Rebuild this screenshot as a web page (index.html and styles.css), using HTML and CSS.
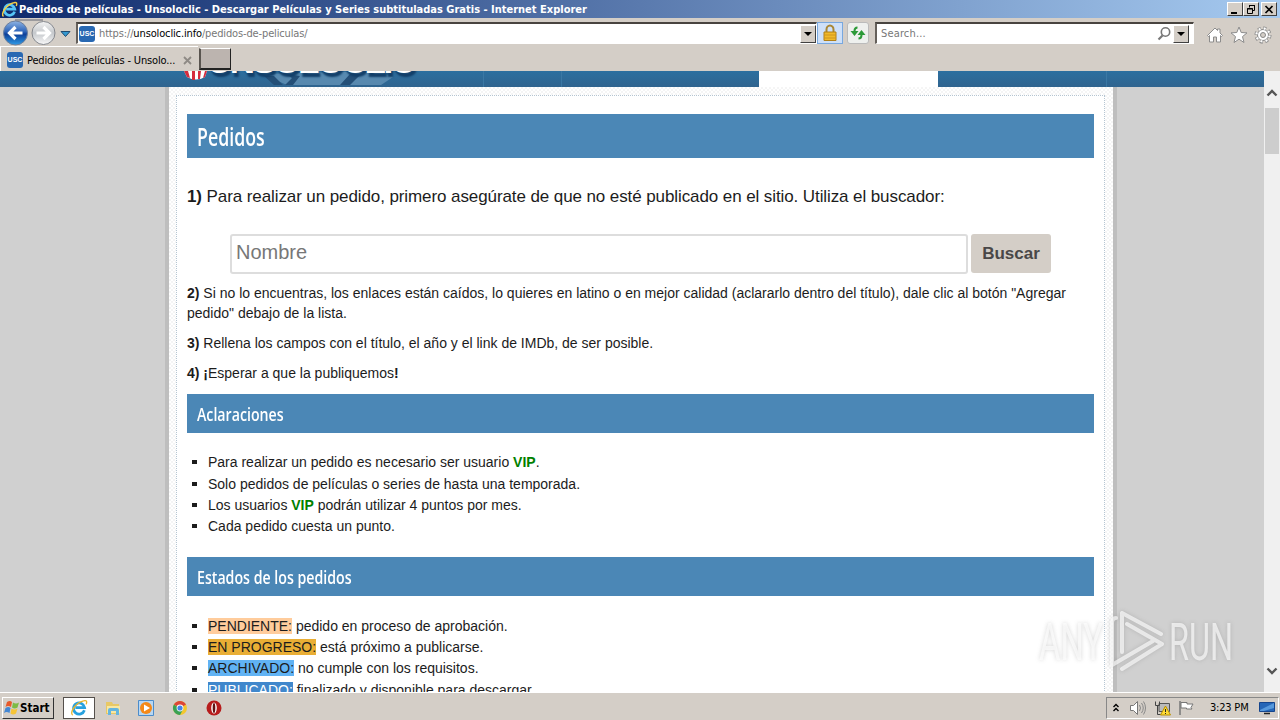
FILE: index.html
```html
<!DOCTYPE html>
<html lang="es">
<head>
<meta charset="UTF-8">
<title>Pedidos de películas - Unsoloclic</title>
<link rel="stylesheet" href="styles.css">
</head>
<body>
<div class="window">
  <!-- Title bar -->
  <div class="titlebar">
    <svg class="ie-icon" width="17" height="17" viewBox="0 0 20 20"><path d="M16 12.5A6.2 6.2 0 1 1 16.2 9.5H6" fill="none" stroke="#55c5f7" stroke-width="3.2"/><path d="M3 18C-1 16 6 4 15 2c4-1 4 1 3 4" fill="none" stroke="#f5cf45" stroke-width="1.7"/></svg>
    <span class="title">Pedidos de películas - Unsoloclic - Descargar Películas y Series subtituladas Gratis - Internet Explorer</span>
    <div class="window-buttons">
      <button class="win-btn"><svg width="14" height="11" viewBox="0 0 14 11"><path d="M3 8h6v2H3z"/></svg></button>
      <button class="win-btn"><svg width="14" height="11" viewBox="0 0 14 11"><path d="M5.5 3.5v-2h5v5h-2M5 1.5h6M3.500 4.500h5v5h-5zM3 5h6" fill="none" stroke="#000"/></svg></button>
      <button class="win-btn close"><svg width="14" height="11" viewBox="0 0 14 11"><path d="M3.500 2l7 7M10.500 2l-7 7" stroke="#000" stroke-width="1.700"/></svg></button>
    </div>
  </div>

  <!-- Address bar -->
  <div class="navbar">
    <svg class="nav-arrows" width="74" height="28" viewBox="0 0 74 28">
      <defs>
        <linearGradient id="back" x1="0" y1="0" x2="0" y2="1"><stop offset="0" stop-color="#8fb4e4"/><stop offset=".45" stop-color="#2b62b8"/><stop offset=".55" stop-color="#0d3f98"/><stop offset="1" stop-color="#2f9ce8"/></linearGradient>
        <linearGradient id="fwd" x1="0" y1="0" x2="0" y2="1"><stop offset="0" stop-color="#f4f4f4"/><stop offset=".5" stop-color="#c5c8cc"/><stop offset="1" stop-color="#f8f8f8"/></linearGradient>
      </defs>
      <path d="M15 2h28" stroke="#8a8a90" stroke-width="1.500"/>
      <circle cx="15.500" cy="15" r="12" fill="url(#back)" stroke="#6d7f9c"/>
      <path d="M22.500 15H10M15.500 9l-6 6 6 6" fill="none" stroke="#fff" stroke-width="3.200"/>
      <circle cx="43.500" cy="15" r="11.500" fill="url(#fwd)" stroke="#85888e"/>
      <path d="M36.500 15H49M43.500 9l6 6-6 6" fill="none" stroke="#fff" stroke-width="3.200"/>
      <path d="M61 13.500h9l-4.500 5z" fill="#3498cf" stroke="#204b70"/>
    </svg>
    <div class="address">
      <span class="favicon">USC</span>
      <span class="url"><i>https://</i>unsoloclic.info<i>/pedidos-de-peliculas/</i></span>
      <button class="drop"></button>
    </div>
    <div class="tool lock"><svg width="18" height="18" viewBox="0 0 18 18"><path d="M5.500 9V5.500a3.500 4 0 0 1 7 0V9" fill="none" stroke="#a98735" stroke-width="2"/><path d="M3 8h12v8.500H3z" fill="#f1b928" stroke="#b07f17"/><path d="M3 11h12M3 14h12" stroke="#ce951c"/></svg></div>
    <div class="tool refresh"><svg width="18" height="18" viewBox="0 0 18 18"><path d="M8.500 3.500Q5.500 3.500 5.500 7v1M9.500 14.500q3 0 3-3.500v-1" fill="none" stroke="#2c9a38" stroke-width="2"/><path d="M1.500 7h8l-4 5zM8.500 11h8l-4-5z" fill="#2c9a38"/></svg></div>
    <div class="search">
      <span>Search...</span>
      <svg width="15" height="15" viewBox="0 0 15 15"><circle cx="8.500" cy="6" r="4.200" fill="none" stroke="#777" stroke-width="1.600"/><path d="M5.500 9.500L1.500 13.500" stroke="#777" stroke-width="2.200"/></svg>
      <button class="drop"></button>
    </div>
    <div class="browser-icons">
      <svg width="18" height="18" viewBox="0 0 18 18"><path d="M1.500 9.500L9 2l2.500 2.500V3h2.500v4l2.500 2.500-1 1-1-1V16h-4v-5H7.500v5h-4V9.500l-1 1z" fill="#fff" stroke="#8c8c8c"/></svg>
      <svg width="18" height="18" viewBox="0 0 18 18"><path d="M9 1l2.200 5.500 5.800.4-4.500 3.700 1.500 5.900-5-3.300-5 3.300 1.500-5.900L1 6.900l5.800-.4z" fill="#fff" stroke="#8c8c8c"/></svg>
      <svg width="18" height="18" viewBox="0 0 18 18"><circle cx="9" cy="9" r="6.800" fill="none" stroke="#888" stroke-width="3.400" stroke-dasharray="3 2.340"/><circle cx="9" cy="9" r="5.500" fill="#fff" stroke="#888"/><circle cx="9" cy="9" r="6.600" fill="none" stroke="#fff" stroke-width="2.200" stroke-dasharray="2 3.180" stroke-dashoffset="-.5"/><circle cx="9" cy="9" r="2.500" fill="#d4cec7" stroke="#888"/></svg>
    </div>
  </div>

  <!-- Tabs -->
  <div class="tabs">
    <div class="tab"><span class="favicon">USC</span><span class="tab-title">Pedidos de películas - Unsolo...</span><svg width="9" height="9" viewBox="0 0 9 9"><path d="M1 1l7 7M8 1L1 8" stroke="#8e8a85" stroke-width="1.800"/></svg></div>
    <div class="new-tab"></div>
  </div>

  <!-- Page -->
  <div class="viewport">
    <div class="page">
      <div class="site-header">
        <div class="logo">
          <svg class="popcorn" width="26" height="10" viewBox="0 0 26 10"><path d="M1 0h23l-2 6q-9 5-18 0z" fill="#fff"/><path d="M1 0h4l2 7-3-1zM9 0h3v9H9zM15 0h3l-1 8h-2zM22 0h2l-2 6-2 1z" fill="#d52c3d"/></svg>
          <span class="logo-text">UNSOLOCLIC</span>
          <svg class="logo-art" width="140" height="15" viewBox="0 0 140 15"><path d="M0 3l115-3 16 6-12 8H25z" fill="#6f9bbd" opacity=".65"/><path d="M2 5l10 9h9L12 5zM24 3l6 4-7 7h8l7-9zM88 3l-10 11h10l11-11z" fill="#244f77"/></svg>
        </div>
        <div class="menu"><span></span><span></span><span class="active"></span><span></span></div>
      </div>
      <div class="wrapper">
        <div class="content">
          <h1 class="heading"><span>Pedidos</span></h1>
          <p class="intro"><b>1)</b> Para realizar un pedido, primero asegúrate de que no esté publicado en el sitio. Utiliza el buscador:</p>
          <div class="search-form">
            <input class="name-input" type="text" placeholder="Nombre">
            <button class="search-btn">Buscar</button>
          </div>
          <p><b>2)</b> Si no lo encuentras, los enlaces están caídos, lo quieres en latino o en mejor calidad (aclararlo dentro del título), dale clic al botón "Agregar pedido" debajo de la lista.</p>
          <p><b>3)</b> Rellena los campos con el título, el año y el link de IMDb, de ser posible.</p>
          <p class="last"><b>4) ¡</b>Esperar a que la publiquemos<b>!</b></p>
          <h2 class="heading small"><span>Aclaraciones</span></h2>
          <ul>
            <li>Para realizar un pedido es necesario ser usuario <b class="vip">VIP</b>.</li>
            <li>Solo pedidos de películas o series de hasta una temporada.</li>
            <li>Los usuarios <b class="vip">VIP</b> podrán utilizar 4 puntos por mes.</li>
            <li>Cada pedido cuesta un punto.</li>
          </ul>
          <h2 class="heading small"><span>Estados de los pedidos</span></h2>
          <ul>
            <li><span class="pending">PENDIENTE:</span> pedido en proceso de aprobación.</li>
            <li><span class="progress">EN PROGRESO:</span> está próximo a publicarse.</li>
            <li><span class="archived">ARCHIVADO:</span> no cumple con los requisitos.</li>
            <li><span class="published">PUBLICADO:</span> finalizado y disponible para descargar.</li>
          </ul>
        </div>
      </div>
    </div>
    <div class="scrollbar">
      <svg width="12" height="8" viewBox="0 0 12 8"><path d="M1.500 6.500L6 2l4.500 4.500" fill="none" stroke="#555" stroke-width="2.400"/></svg>
      <div class="thumb"></div>
      <svg width="12" height="8" viewBox="0 0 12 8"><path d="M1.500 1.500L6 6l4.500-4.500" fill="none" stroke="#555" stroke-width="2.400"/></svg>
    </div>
    <!-- Watermark over the page -->
    <svg class="watermark" width="200" height="66" viewBox="0 0 200 66">
      <path d="M125 25L86 4v39M91 15l35 20-40 25M80 9q-4 0-4 5v42l41-24" fill="none" stroke="#fff" stroke-opacity=".65" stroke-width="4" stroke-linejoin="round" stroke-linecap="round"/>
      <g class="wm-text"><text x="3" y="51" textLength="64" lengthAdjust="spacingAndGlyphs">ANY</text><text x="133" y="51" textLength="64" lengthAdjust="spacingAndGlyphs">RUN</text></g>
    </svg>
  </div>

  <!-- Taskbar -->
  <div class="taskbar">
    <button class="start"><svg width="16" height="16" viewBox="0 0 16 16"><path d="M3 2q3-2 5 0L7 7Q4 5 1.500 7z" fill="#e75a2b"/><path d="M9 2.500q3 2 6 0L13.500 7.500q-3 2-5.500 0z" fill="#7dbb45"/><path d="M1.500 8q3-2 5 0L5.500 13q-3-2-5.500 0z" fill="#4387d4"/><path d="M7.500 8.500q3 2 6 0L12 13.500q-3 2-5.500 0z" fill="#f6c436"/></svg><span>Start</span></button>
    <div class="task active"><svg width="18" height="18" viewBox="0 0 20 20"><path d="M16 12.500A6.200 6.200 0 1 1 16.200 9.500H6" fill="none" stroke="#27a1df" stroke-width="3"/><path d="M3 18C-1 16 6 4 15 2c4-1 4 1 3 4" fill="none" stroke="#e8b52f" stroke-width="1.500"/></svg></div>
    <div class="task"><svg width="18" height="18" viewBox="0 0 18 18"><path d="M2 3h6l1 2h6v10H2z" fill="#e8c865"/><path d="M3 7h13v7H3z" fill="#f8e7a2"/><path d="M4 16v-5q0-2 2-2h7q2 0 2 2v5h-3v-4H7v4z" fill="#65b5df"/></svg></div>
    <div class="task"><svg width="18" height="18" viewBox="0 0 18 18"><path d="M1.500 1.500h15v15h-15z" fill="#b8d7f2" stroke="#4b8ccb"/><circle cx="9" cy="9" r="6" fill="#f58918"/><path d="M7 5.500l6 3.500-6 3.500z" fill="#fff"/></svg></div>
    <div class="task"><svg width="16" height="16" viewBox="0 0 16 16"><circle cx="8" cy="8" r="7" fill="#f3c72e"/><path d="M8 8L1.900 4.500A7 7 0 0 1 14 4.500z" fill="#dc4638"/><path d="M1.900 4.500A7 7 0 0 0 8 15l3-5.500-3-1z" fill="#39a154"/><circle cx="8" cy="8" r="3.400" fill="#fff"/><circle cx="8" cy="8" r="2.600" fill="#4384e8"/></svg></div>
    <div class="task"><svg width="16" height="16" viewBox="0 0 16 16"><circle cx="8" cy="8" r="7.500" fill="#b71c1c"/><ellipse cx="8" cy="8" rx="2.800" ry="5.600" fill="#fff"/><ellipse cx="8" cy="8" rx="1.300" ry="5" fill="#621212"/></svg></div>
    <div class="tray">
      <svg width="8" height="10" viewBox="0 0 8 10"><path d="M1.500 4L4 1.500 6.500 4M1.500 8L4 5.500 6.500 8" fill="none" stroke="#000" stroke-width="1.400"/></svg>
      <svg class="sound" width="18" height="16" viewBox="0 0 18 16"><path d="M1.500 5.500h3l4-4v13l-4-4h-3z" fill="#fff" stroke="#777"/><path d="M10.500 5q2 3 0 6M12.500 3q3.500 5 0 10M14.500 1.500q4 6.500 0 13" fill="none" stroke="#888"/></svg>
      <svg class="network" width="17" height="16" viewBox="0 0 17 16"><path d="M5 3.500h10.500v8H5z" fill="#bbb" stroke="#555"/><path d="M1.500 1.500v4h4v-4M3.500 5.500v9H8" fill="none" stroke="#444"/><path d="M11.500 6l5 9h-10z" fill="#ffdb35" stroke="#b99000"/><path d="M11.500 9v3M11.500 13v1" stroke="#222"/></svg>
      <svg class="flag" width="17" height="16" viewBox="0 0 17 16"><path d="M2 1v14" stroke="#777" stroke-width="1.500"/><path d="M3 2.500h6v1.500h6l-2 3.500 1 1.500H8.500V8H3z" fill="#fff" stroke="#777"/></svg>
      <span class="clock">3:23 PM</span>
      <svg class="desktop" width="16" height="14" viewBox="0 0 16 14"><path d="M.5 1.500h15v9H.5z" fill="#2566b7" stroke="#15458d"/><path d="M1 9L15 2v5L5 10H1z" fill="#5799dc"/><path d="M5 12.500h6" stroke="#222" stroke-width="1.500"/></svg>
    </div>
  </div>
</div>
</body>
</html>
```
FILE: styles.css
```css
/* General Styles */
* {
  box-sizing: border-box;
}
body {
  margin: 0;
  overflow: hidden;
  font-family: "Liberation Sans", Arial, sans-serif;
}
svg {
  flex-shrink: 0;
}
button {
  padding: 0;
}
.window {
  width: 1280px;
  height: 720px;
  display: flex;
  flex-direction: column;
  background: #d4cec7;
  font-family: "DejaVu Sans Condensed", "DejaVu Sans", sans-serif;
  font-stretch: condensed;
  font-size: 11px;
}
/* Title bar */
.titlebar {
  height: 18px;
  flex-shrink: 0;
  display: flex;
  align-items: center;
  padding: 0 3px 0 1px;
  background: linear-gradient(to right, #0e2a6c, #a6caf0);
  color: #fff;
}
.title {
  margin-left: 1px;
  font-weight: bold;
  white-space: nowrap;
}
.window-buttons {
  display: flex;
  margin-left: auto;
}
.win-btn {
  width: 16px;
  height: 14px;
  display: flex;
  align-items: center;
  justify-content: center;
  background: #d4cec7;
  border: 1px solid;
  border-color: #fff #404040 #404040 #fff;
}
.close {
  margin-left: 2px;
}
/* Address bar */
.navbar {
  height: 28px;
  flex-shrink: 0;
  display: flex;
  align-items: center;
  padding-top: 2px;
}
.nav-arrows {
  margin-top: -2px;
}
.address, .search {
  height: 22px;
  display: flex;
  align-items: center;
  background: #fff;
  border: 1px solid #fff;
  border-top: 2px solid #484440;
  border-left: 2px solid #65605b;
}
.address {
  width: 741px;
  margin-left: 2px;
}
.favicon {
  width: 16px;
  height: 16px;
  flex-shrink: 0;
  border-radius: 3px;
  background: #2868b2;
  color: #fff;
  font: bold 7px/16px "Liberation Sans", sans-serif;
  text-align: center;
}
.address .favicon {
  margin-left: 1px;
}
.url {
  margin-left: 4px;
  letter-spacing: -0.14px;
}
.url i {
  font-style: normal;
  color: #777;
}
.drop {
  width: 16px;
  height: 18px;
  margin-left: auto;
  display: flex;
  align-items: center;
  justify-content: center;
  background: #d4cec7;
  border: 1px solid;
  border-color: #fff #404040 #404040 #fff;
}
.drop::after {
  content: "";
  border: 4px solid transparent;
  border-top-color: #000;
  border-bottom: 0;
}
.tool {
  height: 22px;
  display: flex;
  align-items: center;
  justify-content: center;
  border: 1px solid #bbb;
}
.lock {
  width: 26px;
  background: #cee0f8;
  border-color: #78a8df;
}
.refresh {
  width: 22px;
  margin-left: 4px;
  border-radius: 3px;
  background: #eef0ee;
}
.search {
  width: 319px;
  margin-left: 6px;
  padding-right: 4px;
  color: #777;
}
.search span {
  margin-left: 4px;
  margin-right: auto;
  letter-spacing: 0.15px;
}
.search .drop {
  margin-left: 1px;
}
.browser-icons {
  display: flex;
  gap: 6px;
  margin: 3px 0 0 12px;
}
/* Tabs */
.tabs {
  height: 25px;
  flex-shrink: 0;
  display: flex;
}
.tab {
  width: 198px;
  height: 25px;
  display: flex;
  align-items: center;
  padding: 2px 0 0 6px;
  border-top: 1px solid #fff;
  border-left: 1px solid #fff;
}
.tab-title {
  width: 153px;
  margin: 0 3px 0 4px;
  white-space: nowrap;
  letter-spacing: -0.15px;
}
.new-tab {
  width: 32px;
  height: 22px;
  margin: 2px 0 0 1px;
  background: #bcb4af;
  border: 1px solid #222;
  border-top-color: #fff;
  border-left: 2px solid #59544f;
  border-bottom-width: 2px;
}
/* Page */
.viewport {
  position: relative;
  height: 621px;
  flex-shrink: 0;
  display: flex;
  overflow: hidden;
  font-family: "Liberation Sans", Arial, sans-serif;
  font-stretch: normal;
  font-size: 14px;
  line-height: 20px;
  color: #1c1c1c;
}
.page {
  width: 1264px;
  background: #d0d0d0;
}
.site-header {
  height: 16px;
  display: flex;
  overflow: hidden;
  background: linear-gradient(#2c6f9f, #30648f);
}
.logo {
  width: 483px;
  display: flex;
  padding-left: 183px;
}
.logo-text {
  z-index: 1;
  width: 210px;
  margin-top: -27px;
  margin-left: -2px;
  font-size: 35px;
  line-height: 34px;
  font-weight: bold;
  letter-spacing: -2.5px;
  color: #fff;
  text-shadow: 2px 4px 2px #123e68;
}
.logo-art {
  margin-left: -155px;
}
.menu {
  display: flex;
}
.menu span {
  width: 78px;
  border-left: 1px solid #3b78a4;
}
.menu span:nth-child(2) {
  width: 198px;
}
.menu .active {
  width: 179px;
  background: #fff;
  border: 0;
}
.menu span:last-child {
  width: 169px;
  border-left: 0;
  border-right: 1px solid #3b78a4;
}
.wrapper {
  width: 952px;
  height: 605px;
  margin-left: 165px;
  padding: 8px 8px 0 7px;
  border: solid #bebebe;
  border-width: 0 4px;
  background: repeating-conic-gradient(#fff 0 25%, #f5f5f5 0 50%) 0 0 / 4px 4px;
}
.content {
  height: 620px;
  padding: 18px 10px;
  background: #fff;
  border: 1px dotted #b5c5d2;
}
.heading {
  height: 44px;
  margin: 0 0 26px;
  padding-left: 10px;
  background: #4b87b6;
  color: #fff;
  font-family: "Open Sans", sans-serif;
  font-size: 25px;
  line-height: 45px;
  font-weight: 600;
  white-space: nowrap;
}
.heading span {
  display: inline-block;
  transform: scaleX(0.71);
  transform-origin: left;
}
.small {
  height: 39px;
  margin-bottom: 19px;
  font-size: 18px;
  line-height: 40px;
}
.small span {
  transform: scaleX(0.787);
}
p {
  margin: 0 0 10px;
}
.last {
  margin-bottom: 11px;
}
.intro {
  margin-bottom: 24px;
  font-size: 17px;
  line-height: 26px;
  letter-spacing: -0.094px;
  white-space: nowrap;
}
.search-form {
  display: flex;
  gap: 3px;
  margin: 0 43px 9px;
}
.name-input {
  width: 738px;
  height: 40px;
  padding: 0 4px 4px;
  border: 2px solid #ddd;
  border-radius: 3px;
  font: 20px "Liberation Sans", sans-serif;
}
.name-input::placeholder {
  color: #777;
}
.search-btn {
  width: 80px;
  height: 39px;
  border: 0;
  border-radius: 3px;
  background: #d4cec7;
  color: #494747;
  font: bold 17px "Liberation Sans", sans-serif;
}
ul {
  margin: 0 0 19.6px;
  padding: 0.4px 0 0 21px;
  list-style: none;
}
li {
  position: relative;
  line-height: 21.33px;
}
li::before {
  content: "";
  position: absolute;
  left: -16px;
  top: 8px;
  width: 5px;
  height: 4px;
  background: #1c1c1c;
}
.vip {
  color: #008000;
}
.pending {
  background: #ffcc9c;
}
.progress {
  background: #e9ae35;
}
.archived {
  background: #61b3f4;
}
.published {
  background: #4087cc;
  color: #fff;
}
.scrollbar {
  width: 16px;
  display: flex;
  flex-direction: column;
  align-items: center;
  padding: 18px 0 17px;
  background: #f0f0f0;
}
.scrollbar svg:last-child {
  margin-top: auto;
}
.thumb {
  width: 14px;
  height: 46px;
  margin-top: 11px;
  background: #cdcdcd;
}
.watermark {
  position: absolute;
  left: 1036px;
  top: 538px;
  overflow: visible;
  filter: drop-shadow(0 0 2px rgba(100, 100, 100, 0.4));
}
.wm-text {
  font-family: Roboto, sans-serif;
  font-size: 51px;
  fill: #fff;
  fill-opacity: 0.65;
}
/* Taskbar */
.taskbar {
  height: 28px;
  flex-shrink: 0;
  display: flex;
  align-items: center;
  padding: 2px 0 0 2px;
  border-top: 1px solid #fff;
}
.start {
  width: 52px;
  height: 22px;
  display: flex;
  align-items: center;
  padding-left: 1px;
  background: #d4cec7;
  border: 1px solid;
  border-color: #fff #333 #333 #fff;
  font: bold 11.5px "DejaVu Sans Condensed", sans-serif;
  font-stretch: condensed;
}
.task {
  width: 32px;
  height: 22px;
  margin-right: 1.7px;
  display: flex;
  align-items: center;
  justify-content: center;
}
.task.active {
  margin-left: 9px;
  background: #fff;
  border: 1px solid #55504c;
}
.tray {
  width: 173px;
  height: 22px;
  display: flex;
  align-items: center;
  margin: 0 1px 0 auto;
  padding-left: 5px;
  border: 1px solid;
  border-color: #888 #fff #fff #888;
}
.sound {
  margin-left: 9px;
}
.network {
  margin-left: 7px;
}
.flag {
  margin-left: 7px;
}
.clock {
  margin-left: 15px;
  letter-spacing: -0.2px;
  white-space: nowrap;
}
.desktop {
  margin-left: auto;
  margin-right: 3px;
}
```
